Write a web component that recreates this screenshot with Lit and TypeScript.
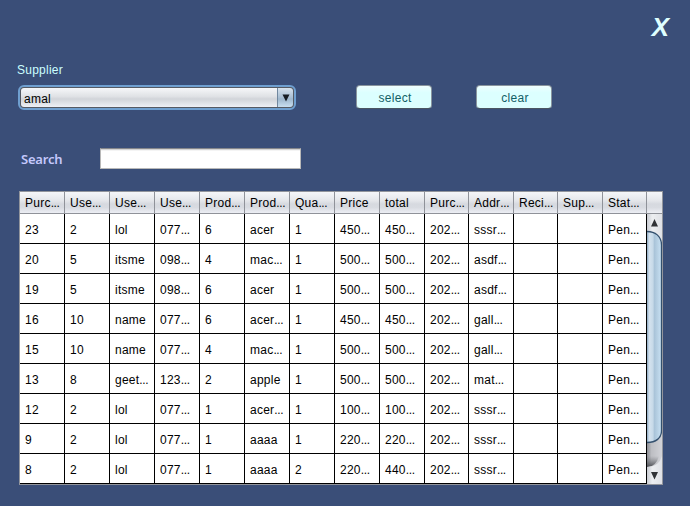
import { LitElement, html, css, svg } from "lit";
import { customElement, property } from "lit/decorators.js";

const HEADERS = ["Purc...", "Use...", "Use...", "Use...", "Prod...", "Prod...", "Qua...", "Price", "total", "Purc...", "Addr...", "Reci...", "Sup...", "Stat..."];

const ROWS = [
  ["23", "2", "lol", "077...", "6", "acer", "1", "450...", "450...", "202...", "sssr...", "", "", "Pen..."],
  ["20", "5", "itsme", "098...", "4", "mac...", "1", "500...", "500...", "202...", "asdf...", "", "", "Pen..."],
  ["19", "5", "itsme", "098...", "6", "acer", "1", "500...", "500...", "202...", "asdf...", "", "", "Pen..."],
  ["16", "10", "name", "077...", "6", "acer...", "1", "450...", "450...", "202...", "gall...", "", "", "Pen..."],
  ["15", "10", "name", "077...", "4", "mac...", "1", "500...", "500...", "202...", "gall...", "", "", "Pen..."],
  ["13", "8", "geet...", "123...", "2", "apple", "1", "500...", "500...", "202...", "mat...", "", "", "Pen..."],
  ["12", "2", "lol", "077...", "1", "acer...", "1", "100...", "100...", "202...", "sssr...", "", "", "Pen..."],
  ["9", "2", "lol", "077...", "1", "aaaa", "1", "220...", "220...", "202...", "sssr...", "", "", "Pen..."],
  ["8", "2", "lol", "077...", "1", "aaaa", "2", "220...", "440...", "202...", "sssr...", "", "", "Pen..."],
];

const label = (text: string) =>
  text.endsWith("...") ? html`<span>${text.slice(0, -3)}<span class="dots">...</span></span>` : html`<span>${text}</span>`;

@customElement("scroll-bar")
export class ScrollBar extends LitElement {
  static styles = css`
    :host { display: block; width: 15px; height: 270px; }
    svg { display: block; }
  `;
  render() {
    return html`<svg width="15" height="270" viewBox="0 0 15 270">
      ${svg`<defs>
        <linearGradient id="track"><stop offset="0" stop-color="#8c8e94"/><stop offset=".3" stop-color="#bdbec3"/><stop offset="1" stop-color="#d2d3d8"/></linearGradient>
        <linearGradient id="button"><stop offset="0" stop-color="#c9ccd2"/><stop offset=".35" stop-color="#eceef1"/><stop offset="1" stop-color="#dfe1e6"/></linearGradient>
        <linearGradient id="thumb"><stop offset="0" stop-color="#8aa7c0"/><stop offset=".15" stop-color="#d5e3ef"/><stop offset=".42" stop-color="#c6d9e8"/><stop offset=".5" stop-color="#a9c3d8"/><stop offset="1" stop-color="#c9e2f4"/></linearGradient>
        <linearGradient id="shade" x1="0" y1="0" x2="0" y2="1"><stop offset="0" stop-color="#77797f" stop-opacity="0"/><stop offset="1" stop-color="#4c4e53"/></linearGradient>
      </defs>
      <rect width="15" height="270" fill="url(#track)"/>
      <path d="M0 0H15V31Q13 18 0 17Z" fill="url(#button)"/>
      <path d="M0 242H12Q9 253 0 253Z" fill="url(#shade)"/>
      <path d="M0 253Q12 253 15 242V270H0Z" fill="url(#button)"/>
      <path d="M0 17.5C8 17.5 14.5 22 14.5 31V217C14.5 224 9 228.5 0 228.5Z" fill="url(#thumb)"/>
      <path d="M0 17.5C8 17.5 14.5 22 14.5 31V217C14.5 224 9 228.5 0 228.5" fill="none" stroke="#34506e" stroke-width="1.3"/>
      <path d="M4 12.5H11L7.5 5Z M4 258H11L7.5 265.5Z" fill="#303236"/>`}
    </svg>`;
  }
}

@customElement("purchase-table")
export class PurchaseTable extends LitElement {
  @property({ attribute: false }) headers: string[] = [];
  @property({ attribute: false }) rows: string[][] = [];
  static styles = css`
    :host {
      display: block; box-sizing: border-box; width: 644px; height: 294px;
      border: 1px solid #92959c; background: #fff; overflow: hidden;
    }
    .row {
      display: grid; height: 30px;
      grid-template-columns: repeat(9, 45px) 44px 45px 44px 45px 44px;
    }
    .cell {
      box-sizing: border-box; padding: 3px 0 0 5px; line-height: 27px; white-space: nowrap;
      border-right: 1px solid #000; border-bottom: 1px solid #000; overflow: hidden;
    }
    .head {
      height: 22px; grid-template-columns: repeat(9, 45px) 44px 45px 44px 45px 44px 15px;
      background: linear-gradient(#f5f6f9 0, #e4e6ea 40%, #d6d9df 55%, #d8dbe1 70%, #f0f2f8 100%);
    }
    .head .cell { padding-top: 1px; line-height: 21px; border-color: #8f9299; }
    .head .cell:last-child { border-right: 0; }
    .body { display: flex; }
    .dots { letter-spacing: -0.4px; }
  `;
  render() {
    return html`
      <div class="row head">${this.headers.map((h) => html`<div class="cell">${label(h)}</div>`)}<div class="cell"></div></div>
      <div class="body">
        <div>${this.rows.map((r) => html`<div class="row">${r.map((c) => html`<div class="cell">${label(c)}</div>`)}</div>`)}</div>
        <scroll-bar></scroll-bar>
      </div>`;
  }
}

@customElement("app-root")
export class AppRoot extends LitElement {
  static styles = css`
    :host {
      display: flex; flex-direction: column; box-sizing: border-box; width: 690px; height: 506px;
      padding: 0 18px; background: #3a4e78; overflow: hidden; color: #000;
      font: 12px "Liberation Sans", Arial, sans-serif; letter-spacing: 0.25px;
    }
    .top { display: flex; justify-content: flex-end; height: 62px; }
    .close {
      font: italic 700 26px/30px "Liberation Sans", Arial, sans-serif; color: #dfffff;
      letter-spacing: 0; padding-top: 12px; margin-right: 3px;
    }
    .caption { margin-left: -1px; height: 23px; line-height: 16px; color: #ccffff; }
    .controls { display: flex; align-items: flex-start; height: 63px; }
    .combo {
      display: flex; box-sizing: border-box; width: 278px; height: 25px; border: 2px solid #6f9fd0;
      border-radius: 6px; overflow: hidden; background: #555a63;
    }
    .value {
      flex: 1; margin: 1px 0 1px 1px; padding-left: 3px; line-height: 23px; border-radius: 3px 0 0 3px;
      background: linear-gradient(#f6f7f9, #dfe1e5 45%, #d1d4d9 58%, #eef0f6);
    }
    .arrow {
      display: flex; align-items: center; justify-content: center; width: 15px; margin: 1px 1px 1px 0;
      border-left: 1px solid #71889f; border-radius: 0 3px 3px 0;
      background: linear-gradient(#d7e2ed, #a9bfd4 50%, #9eb7cd 58%, #c9dff0);
    }
    .button {
      box-sizing: border-box; width: 76px; height: 24px; border: 1px solid #8a959e; border-bottom-color: #4b5662;
      border-radius: 4px; background: linear-gradient(#effeff, #dcffff 30%, #dcffff); color: #126066;
      text-align: center; line-height: 24px; letter-spacing: 0.3px; padding-left: 2px;
    }
    .first { margin-left: 60px; }
    .second { margin-left: 44px; }
    .search { display: flex; height: 43px; }
    .search-label {
      width: 79px; margin-left: 3px; font: 600 13px/22px "Noto Sans", sans-serif;
      color: #c4c8fc; letter-spacing: -0.2px;
    }
    .field {
      box-sizing: border-box; width: 201px; height: 21px; border: 1px solid #b8b8b8; border-top-color: #85878c;
      background: linear-gradient(#d4d4d4 0 1px, #f4f4f4 1px 2px, #fff 2px);
    }
    purchase-table { margin-left: 1px; }
  `;
  render() {
    return html`
      <div class="top"><div class="close">X</div></div>
      <div class="caption">Supplier</div>
      <div class="controls">
        <div class="combo">
          <div class="value">amal</div>
          <div class="arrow"><svg width="8" height="8" viewBox="0 0 8 8"><path d="M.5 .5H7.5L4 7.5Z" fill="#171d24"/></svg></div>
        </div>
        <div class="button first">select</div>
        <div class="button second">clear</div>
      </div>
      <div class="search"><div class="search-label">Search</div><div class="field"></div></div>
      <purchase-table .headers=${HEADERS} .rows=${ROWS}></purchase-table>`;
  }
}
